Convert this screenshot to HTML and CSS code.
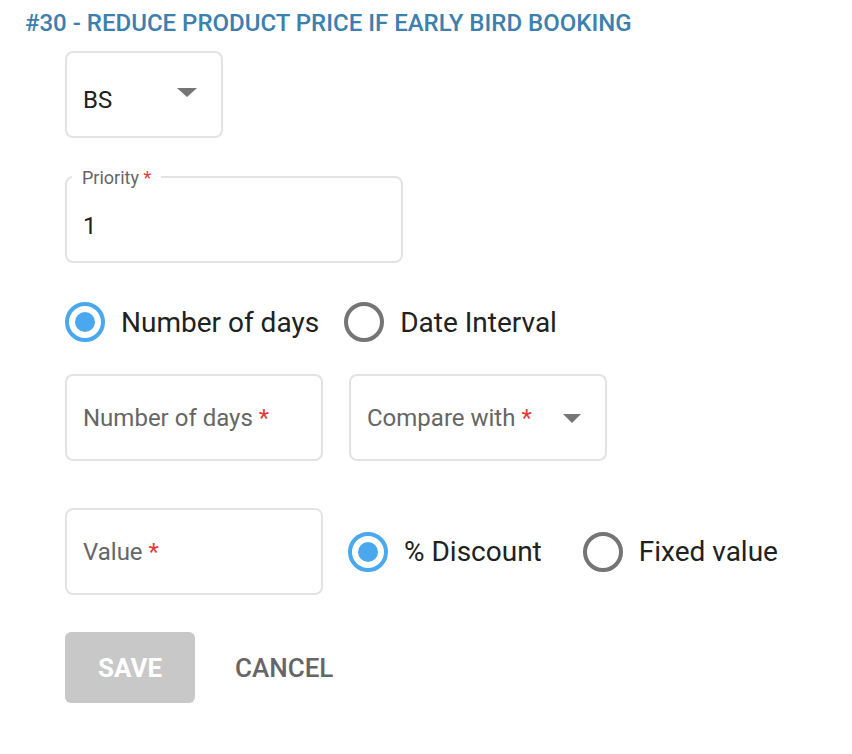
FILE: index.html
```html
<!DOCTYPE html>
<html lang="en">
<head>
  <meta charset="UTF-8" />
  <title>Early bird rule</title>
  <meta name="viewport" content="width=device-width, initial-scale=1" />
  <link rel="stylesheet" href="styles.css">
</head>
<body>
  <h2 class="rule-title">#30 - Reduce product price if early bird booking</h2>

  <form class="rule-form">
    <div class="field select-field small">
      <span class="field-value">BS</span>
      <span class="caret caret-high"></span>
    </div>

    <div class="field outlined">
      <span class="float-label">Priority <span class="req">*</span></span>
      <span class="field-value">1</span>
    </div>

    <div class="radio-row">
      <label class="radio checked"><span class="dot"></span>Number of days</label>
      <label class="radio"><span class="dot"></span>Date Interval</label>
    </div>

    <div class="field-row">
      <div class="field"><span class="placeholder">Number of days <span class="req">*</span></span></div>
      <div class="field select-field">
        <span class="placeholder">Compare with <span class="req">*</span></span>
        <span class="caret"></span>
      </div>
    </div>

    <div class="field-row value-row">
      <div class="field"><span class="placeholder">Value <span class="req">*</span></span></div>
      <label class="radio checked"><span class="dot"></span>% Discount</label>
      <label class="radio"><span class="dot"></span>Fixed value</label>
    </div>

    <div class="actions">
      <button type="button" class="btn-save" disabled>Save</button>
      <button type="button" class="btn-cancel">Cancel</button>
    </div>
  </form>
</body>
</html>
```

FILE: styles.css
```css
body {
  margin: 0;
  padding: 8px 0 0 25px;
  font-family: Roboto, 'Liberation Sans', sans-serif;
  background: #fff;
  color: #212121;
}
.rule-title {
  margin: 0;
  font-size: 24px;
  font-weight: 500;
  line-height: 30px;
  text-transform: uppercase;
  color: #3b80ae;
}
.rule-form {
  padding-left: 40px;
  margin-top: 13px;
}
.field {
  box-sizing: border-box;
  width: 258px;
  height: 87px;
  border: 2px solid #e3e3e3;
  border-radius: 8px;
  padding: 0 16px;
  display: flex;
  align-items: center;
  position: relative;
}
.field.small {
  width: 158px;
}
.field-value {
  font-size: 24px;
  color: #212121;
}
.select-field .field-value {
  padding-top: 10px;
}
.placeholder {
  font-size: 24px;
  color: #666;
}
.req {
  color: #e53935;
}
.caret {
  position: absolute;
  right: 24px;
  top: 38px;
  width: 0;
  height: 0;
  border-left: 9px solid transparent;
  border-right: 9px solid transparent;
  border-top: 9px solid #757575;
}
.caret-high {
  top: 35px;
  border-left-width: 10px;
  border-right-width: 10px;
}
.outlined {
  width: 338px;
  margin-top: 38px;
}
.outlined .field-value {
  padding-top: 13px;
}
.float-label {
  position: absolute;
  top: -10px;
  left: 5px;
  padding: 0 10px;
  background: #fff;
  font-size: 18px;
  line-height: 20px;
  color: #666;
}
.radio-row {
  display: flex;
  align-items: center;
  gap: 25px;
  margin-top: 38px;
  height: 42px;
}
.radio {
  display: flex;
  align-items: center;
  gap: 16px;
  font-size: 28px;
  color: #212121;
}
.dot {
  box-sizing: border-box;
  width: 40px;
  height: 40px;
  border: 4px solid #757575;
  border-radius: 50%;
  display: flex;
  align-items: center;
  justify-content: center;
}
.radio.checked .dot {
  border-color: #4aa8ee;
}
.radio.checked .dot::after {
  content: "";
  width: 20px;
  height: 20px;
  border-radius: 50%;
  background: #4aa8ee;
}
.field-row {
  display: flex;
  align-items: center;
  gap: 26px;
  margin-top: 31px;
}
.value-row {
  margin-top: 47px;
  gap: 25px;
}
.value-row .radio + .radio {
  margin-left: 16px;
}
.actions {
  display: flex;
  align-items: center;
  gap: 40px;
  margin-top: 37px;
}
.actions button {
  font-family: inherit;
  font-size: 26px;
  font-weight: 500;
  text-transform: uppercase;
  border: none;
  background: none;
  padding: 0;
}
.actions .btn-save {
  width: 130px;
  height: 71px;
  border-radius: 6px;
  background: #c8c8c8;
  color: #fff;
  font-weight: 700;
}
.btn-cancel {
  color: #666;
}
```
